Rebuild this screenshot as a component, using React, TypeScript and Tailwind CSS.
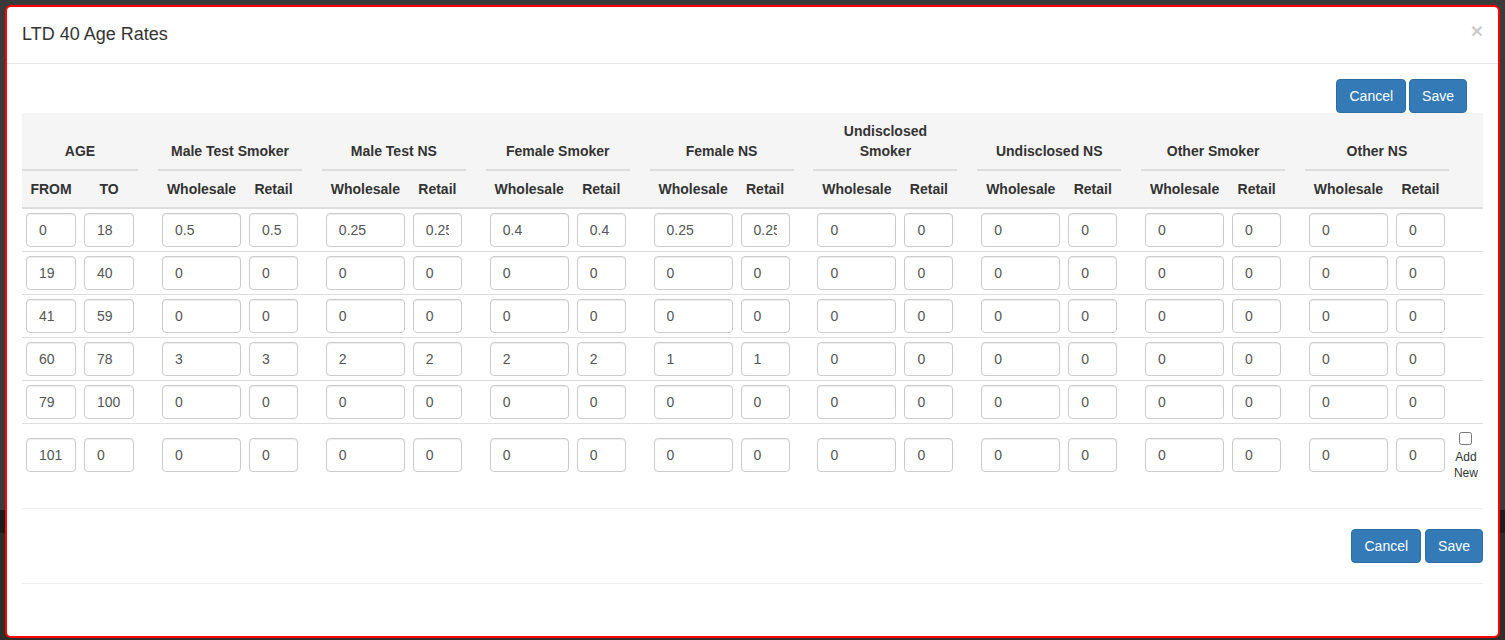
import React from 'react';

const groups = [
  'Male Test Smoker',
  'Male Test NS',
  'Female Smoker',
  'Female NS',
  'Undisclosed Smoker',
  'Undisclosed NS',
  'Other Smoker',
  'Other NS',
];

const zeros = Array(16).fill('0');

const rows: { from: string; to: string; rates: string[] }[] = [
  { from: '0', to: '18', rates: ['0.5', '0.5', '0.25', '0.25', '0.4', '0.4', '0.25', '0.25', ...zeros.slice(8)] },
  { from: '19', to: '40', rates: zeros },
  { from: '41', to: '59', rates: zeros },
  { from: '60', to: '78', rates: ['3', '3', '2', '2', '2', '2', '1', '1', ...zeros.slice(8)] },
  { from: '79', to: '100', rates: zeros },
  { from: '101', to: '0', rates: zeros },
];

const Btn = ({ label }: { label: string }) => (
  <button className="h-[34px] rounded-[4px] border border-[#2e6da4] bg-[#337ab7] px-[12px] text-[14px] leading-[20px] text-white">
    {label}
  </button>
);

const Field = ({ value }: { value: string }) => (
  <input
    defaultValue={value}
    className="block h-[34px] w-full rounded-[4px] border border-[#ccc] bg-white px-[12px] text-[14px] text-[#555] shadow-[inset_0_1px_1px_rgba(0,0,0,0.075)] outline-none"
  />
);

const thTop = 'px-[8px] pt-[8px] pb-[8px] align-bottom text-center font-bold leading-[20px]';

export default function App() {
  return (
    <div className="relative h-[640px] w-full overflow-hidden font-['Liberation_Sans',Arial,sans-serif] text-[14px] text-[#333]">
      {/* page behind the backdrop */}
      <div className="flex h-full flex-col">
        <div className="h-[510px] bg-[#3a3a3a]"></div>
        <div className="h-[23px] bg-[#1c1c1c]"></div>
        <div className="flex-1 bg-[#2d2d2a]"></div>
      </div>

      <div className="absolute left-[5px] top-[5px] h-[633px] w-[1495px] rounded-[6px] border-2 border-[#ff0000] bg-white">
        <div className="flex items-start justify-between border-b border-[#e5e5e5] p-[15px]">
          <h4 className="m-0 text-[18px] leading-[1.42857]">LTD 40 Age Rates</h4>
          <button className="-mt-[2px] text-[21px] font-bold leading-none text-black opacity-20">×</button>
        </div>

        <div className="p-[15px]">
          <div className="flex justify-end gap-[3px] pr-[16px]">
            <Btn label="Cancel" />
            <Btn label="Save" />
          </div>

          <table className="w-full table-fixed border-collapse">
            <colgroup>
              <col className="w-[58px]" />
              <col className="w-[58px]" />
              <col className="w-[20px]" />
              {groups.map((g, i) => (
                <React.Fragment key={g}>
                  <col className="w-[87px]" />
                  <col className="w-[57px]" />
                  {i < groups.length - 1 && <col className="w-[19.85px]" />}
                </React.Fragment>
              ))}
              <col />
            </colgroup>
            <thead className="bg-[#f5f5f5]">
              <tr>
                <th colSpan={2} className={`${thTop} border-b-2 border-[#ddd]`}>AGE</th>
                <th></th>
                {groups.map((g) => (
                  <React.Fragment key={g}>
                    <th colSpan={2} className={`${thTop} border-b-2 border-[#ddd]`}>{g}</th>
                    <th></th>
                  </React.Fragment>
                ))}
              </tr>
              <tr className="border-b-2 border-[#ddd]">
                <th className={thTop}>FROM</th>
                <th className={thTop}>TO</th>
                <th></th>
                {groups.map((g, i) => (
                  <React.Fragment key={g}>
                    <th className={thTop}>Wholesale</th>
                    <th className={thTop}>Retail</th>
                    {i < groups.length - 1 && <th></th>}
                  </React.Fragment>
                ))}
                <th></th>
              </tr>
            </thead>
            <tbody>
              {rows.map((r, ri) => (
                <tr key={ri} className="border-t border-[#ddd]">
                  <td className="p-[4px] align-middle"><Field value={r.from} /></td>
                  <td className="p-[4px] align-middle"><Field value={r.to} /></td>
                  <td></td>
                  {groups.map((g, gi) => (
                    <React.Fragment key={g}>
                      <td className="p-[4px] align-middle"><Field value={r.rates[gi * 2]} /></td>
                      <td className="p-[4px] align-middle"><Field value={r.rates[gi * 2 + 1]} /></td>
                      {gi < groups.length - 1 && <td></td>}
                    </React.Fragment>
                  ))}
                  <td className="p-[4px] align-middle text-center">
                    {ri === rows.length - 1 && (
                      <div className="flex flex-col items-center">
                        <input type="checkbox" className="mt-[4px] h-[13px] w-[13px]" />
                        <div className="mt-[4px] text-[12px] leading-[16.5px]">Add<br />New</div>
                      </div>
                    )}
                  </td>
                </tr>
              ))}
            </tbody>
          </table>

          <div className="mt-[22px] border-t border-[#eee]"></div>
          <div className="mt-[20px] flex justify-end gap-[4px]">
            <Btn label="Cancel" />
            <Btn label="Save" />
          </div>
          <div className="mt-[20px] border-t border-[#eee]"></div>
        </div>
      </div>
    </div>
  );
}
